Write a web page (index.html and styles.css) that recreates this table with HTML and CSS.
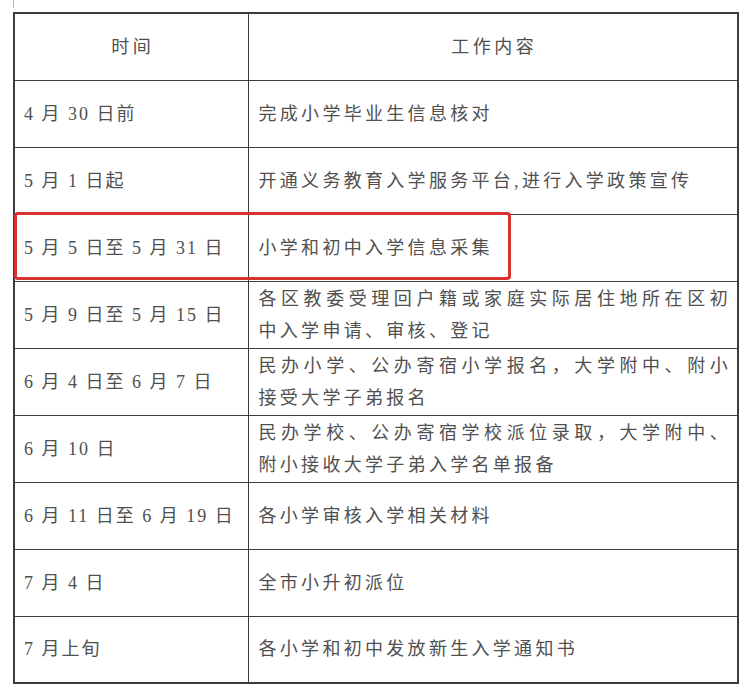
FILE: index.html
```html
<!DOCTYPE html>
<html lang="zh-CN">
<head>
<meta charset="utf-8">
<title>入学工作时间安排</title>
<link rel="stylesheet" href="styles.css">
</head>
<body>
<div class="tick"></div>
<div class="wrap">
  <table class="schedule">
    <colgroup><col class="c-time"><col class="c-work"></colgroup>
    <thead>
      <tr><th>时间</th><th class="work">工作内容</th></tr>
    </thead>
    <tbody>
      <tr><td class="time">4 月 30 日前</td><td class="work">完成小学毕业生信息核对</td></tr>
      <tr><td class="time">5 月 1 日起</td><td class="work">开通义务教育入学服务平台,进行入学政策宣传</td></tr>
      <tr><td class="time">5 月 5 日至 5 月 31 日</td><td class="work">小学和初中入学信息采集</td></tr>
      <tr><td class="time">5 月 9 日至 5 月 15 日</td><td class="work"><span class="line full">各区教委受理回户籍或家庭实际居住地所在区初</span><span class="line">中入学申请、审核、登记</span></td></tr>
      <tr><td class="time">6 月 4 日至 6 月 7 日</td><td class="work"><span class="line full">民办小学、公办寄宿小学报名，大学附中、附小</span><span class="line">接受大学子弟报名</span></td></tr>
      <tr><td class="time">6 月 10 日</td><td class="work"><span class="line full">民办学校、公办寄宿学校派位录取，大学附中、</span><span class="line">附小接收大学子弟入学名单报备</span></td></tr>
      <tr><td class="time">6 月 11 日至 6 月 19 日</td><td class="work">各小学审核入学相关材料</td></tr>
      <tr><td class="time">7 月 4 日</td><td class="work">全市小升初派位</td></tr>
      <tr><td class="time">7 月上旬</td><td class="work">各小学和初中发放新生入学通知书</td></tr>
    </tbody>
  </table>
  <div class="highlight"></div>
</div>
</body>
</html>
```
FILE: styles.css
```css
html, body {
  margin: 0;
  padding: 0;
  background: #ffffff;
}
body {
  font-family: "Liberation Serif", "Noto Sans CJK SC", serif;
  color: #505050;
}
.tick {
  width: 1px;
  height: 8px;
  margin-left: 13px;
  background: #b5b5b5;
}
.wrap {
  position: relative;
  width: 724px;
  margin-left: 13px;
  margin-top: 4px;
}
.schedule {
  width: 724px;
  border-collapse: collapse;
  table-layout: fixed;
  border: 2px solid #3c3c3c;
}
.c-time { width: 234px; }
.c-work { width: 490px; }
.schedule th,
.schedule td {
  border: 1.5px solid #3c3c3c;
  height: 67px;
  padding: 0 6px 0 9px;
  box-sizing: border-box;
  font-size: 18px;
  font-weight: normal;
  line-height: 32px;
  vertical-align: middle;
  text-align: left;
}
.schedule th {
  text-align: center;
  letter-spacing: 3.5px;
}
.schedule td.time {
  letter-spacing: 2px;
  white-space: nowrap;
}
.schedule td.work {
  letter-spacing: 3.3px;
  padding-left: 10px;
}
.line {
  display: block;
  white-space: nowrap;
}
.line.full {
  text-align: justify;
  text-align-last: justify;
  margin-right: 0;
}
.highlight {
  position: absolute;
  left: 1px;
  top: 200px;
  width: 497px;
  height: 68px;
  border: 3px solid #d8322e;
  border-radius: 4px;
  box-sizing: border-box;
}
```
